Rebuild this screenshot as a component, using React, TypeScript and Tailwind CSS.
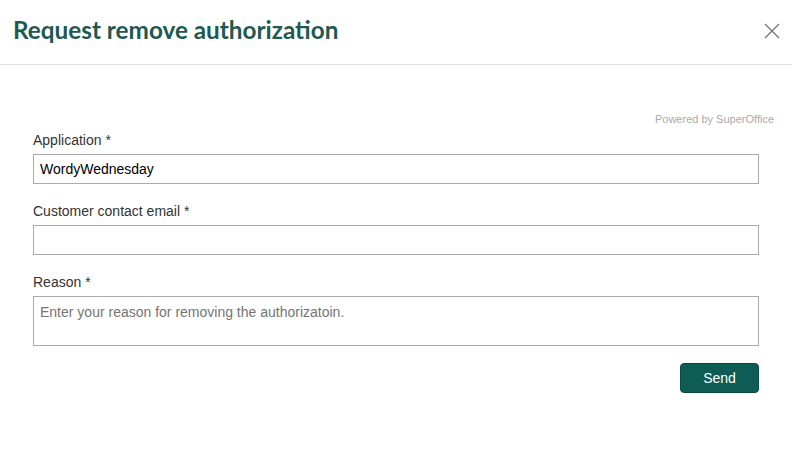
import React from "react";

export default function App() {
  return (
    <div className="w-[792px] h-[459px] bg-white" style={{ fontFamily: "Arial, 'Liberation Sans', sans-serif" }}>
      <div className="h-[65px] border-b border-[#dee2e6] flex items-center justify-between pl-[13px] pr-[12px]">
        <h1 className="text-[24.3px] font-bold text-[#1d5a51] leading-none pb-[4px]" style={{ fontFamily: "Lato, sans-serif" }}>
          Request remove authorization
        </h1>
        <svg width="16" height="16" viewBox="0 0 16 16" className="mb-[3px]">
          <path d="M1 1 L15 15 M15 1 L1 15" stroke="#777" strokeWidth="1.4" fill="none" />
        </svg>
      </div>
      <div className="px-[33px] pt-[47px]">
        <div className="flex justify-end mr-[-15px] text-[11px] text-[#aaa] leading-[14px] h-[14px]">Powered by SuperOffice</div>
        <div className="mt-[4px] flex flex-col">
          <label className="text-[14px] text-[#333] leading-[20px] h-[20px]">Application *</label>
          <div className="mt-[4px] h-[30px] border border-[#aaa] flex items-center px-[6px] text-[14px] text-black">WordyWednesday</div>
          <label className="text-[14px] text-[#333] leading-[20px] h-[20px] mt-[17px]">Customer contact email *</label>
          <div className="mt-[4px] h-[30px] border border-[#aaa]"></div>
          <label className="text-[14px] text-[#333] leading-[20px] h-[20px] mt-[17px]">Reason *</label>
          <div className="mt-[4px] h-[50px] border border-[#aaa] px-[6px] pt-[6px] text-[14px] text-[#757575] leading-[18px]">
            Enter your reason for removing the authorizatoin.
          </div>
          <div className="flex justify-end mt-[17px]">
            <button className="w-[79px] h-[30px] rounded-[4px] bg-[#0d5d56] border border-[#0a4a44] text-white text-[14px]">Send</button>
          </div>
        </div>
      </div>
    </div>
  );
}
